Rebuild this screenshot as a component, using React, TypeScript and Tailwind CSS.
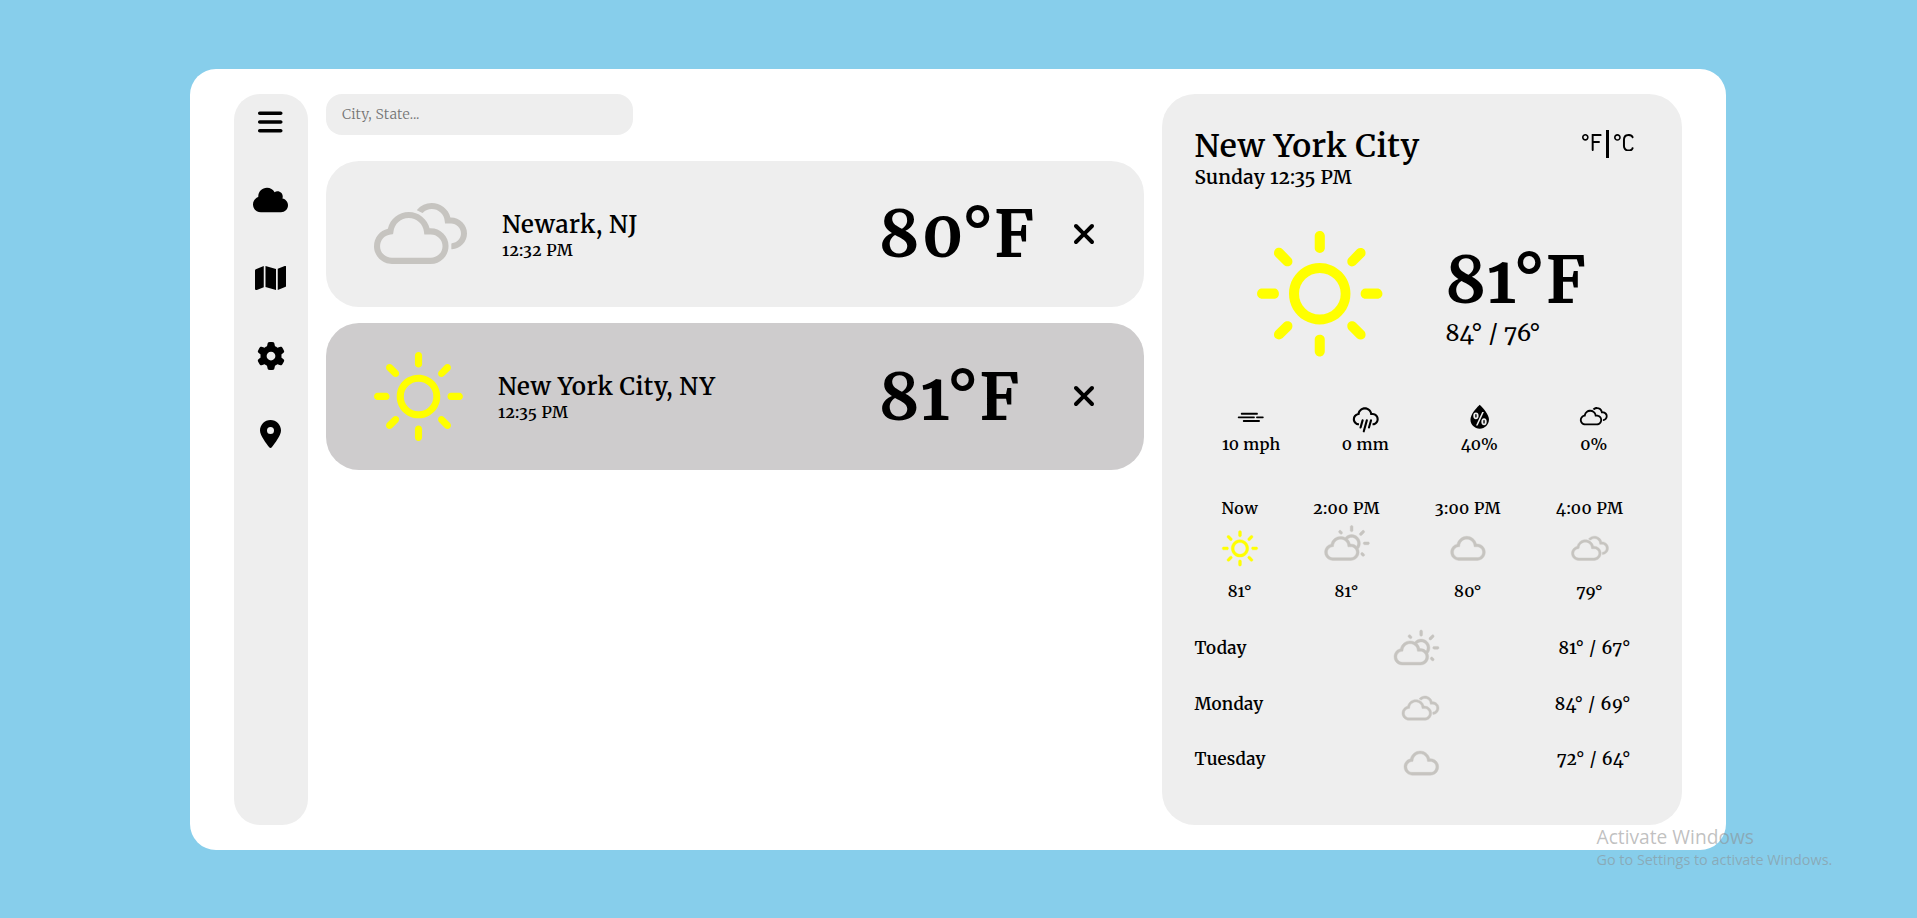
import type { ComponentType, ReactNode } from "react";
import type { IconBaseProps } from "react-icons";
import {
  WiCelsius,
  WiCloud,
  WiCloudy,
  WiDayCloudy,
  WiDaySunny,
  WiFahrenheit,
  WiHumidity,
  WiRain,
  WiWindy,
} from "react-icons/wi";
import { FaBars, FaCloud, FaGear, FaLocationDot, FaMap, FaXmark } from "react-icons/fa6";

type Icon = ComponentType<IconBaseProps>;

/* Tight view boxes, so that an icon's size is the size of its drawing. */
const TIGHT = {
  sunny: "4.37 4 21.24 21.26",
  cloudy: "3.89 7.3 22.21 14.55",
  cloud: "4.61 7.39 20.78 14.46",
  dayCloudy: "1.56 0.91 26.88 20.94",
  fahrenheit: "9.67 9.2 10.64 9.22",
  celsius: "9.75 9.12 10.46 9.36",
};

const navItems: { label: string; Icon: Icon; width: string }[] = [
  { label: "menu", Icon: FaBars, width: "w-[24.5px]" },
  { label: "weather", Icon: FaCloud, width: "w-[35px]" },
  { label: "map", Icon: FaMap, width: "w-[31.5px]" },
  { label: "settings", Icon: FaGear, width: "w-7" },
  { label: "location", Icon: FaLocationDot, width: "w-[21px]" },
];

function Sidebar() {
  return (
    <nav className="flex w-[74px] shrink-0 flex-col items-center gap-[50px] rounded-[26px] bg-[#eeeeee] pt-3.5 pr-px">
      {navItems.map(({ label, Icon, width }) => (
        <button key={label} aria-label={label} className="flex h-7 items-center justify-center">
          <Icon className={`h-7 shrink-0 ${width}`} />
        </button>
      ))}
    </nav>
  );
}

function CityCard({
  icon,
  name,
  time,
  temp,
  className,
}: {
  icon: ReactNode;
  name: string;
  time: string;
  temp: string;
  className: string;
}) {
  return (
    <article className={`flex items-center rounded-[33px] pl-12 ${className}`}>
      {icon}
      <div className="ml-[35px] flex-1 font-semibold whitespace-nowrap">
        <h2 className="text-2xl leading-[31px] tracking-[0.024em]">{name}</h2>
        <p className="text-base leading-5 tracking-[0.028em]">{time}</p>
      </div>
      <div className="flex w-[265px] items-center justify-between pr-[48.5px]">
        <p className="text-[64px] leading-[80px] font-bold tracking-[0.05em]">{temp}</p>
        <button aria-label="remove" className="-mt-px">
          <FaXmark className="h-8 w-6" />
        </button>
      </div>
    </article>
  );
}

const stats: { text: string; Icon: Icon }[] = [
  { text: "10 mph", Icon: WiWindy },
  { text: "0 mm", Icon: WiRain },
  { text: "40%", Icon: WiHumidity },
  { text: "0%", Icon: WiCloudy },
];

const hours: { time: string; temp: string; Icon: Icon; color: string }[] = [
  { time: "Now", temp: "81°", Icon: WiDaySunny, color: "text-[#ffff00]" },
  { time: "2:00 PM", temp: "81°", Icon: WiDayCloudy, color: "text-[#c6c4c0]" },
  { time: "3:00 PM", temp: "80°", Icon: WiCloud, color: "text-[#c6c4c0]" },
  { time: "4:00 PM", temp: "79°", Icon: WiCloudy, color: "text-[#c6c4c0]" },
];

const days: { day: string; range: string; icon: ReactNode }[] = [
  {
    day: "Today",
    range: "81° / 67°",
    icon: <WiDayCloudy viewBox={TIGHT.dayCloudy} className="h-[35px] w-[45px]" />,
  },
  {
    day: "Monday",
    range: "84° / 69°",
    icon: <WiCloudy viewBox={TIGHT.cloudy} className="h-[24.3px] w-[37px]" />,
  },
  {
    day: "Tuesday",
    range: "72° / 64°",
    icon: <WiCloud viewBox={TIGHT.cloud} className="h-[24.2px] w-[34.7px]" />,
  },
];

function Details() {
  return (
    <section className="w-[520px] shrink-0 rounded-[33px] bg-[#eeeeee] pt-8 font-semibold whitespace-nowrap">
      <header className="flex items-start justify-between pr-[48.5px] pl-[32.5px]">
        <div>
          <h1 className="text-[32px] leading-10 tracking-[0.019em]">New York City</h1>
          <p className="text-[19px] leading-[23px] tracking-[0.018em]">Sunday 12:35 PM</p>
        </div>
        <div className="flex items-start gap-[4.5px] pt-[3.5px]">
          <WiFahrenheit viewBox={TIGHT.fahrenheit} className="mt-[4.5px] h-[17px] w-[19.6px]" />
          <span className="h-7 w-[3px] bg-black" />
          <WiCelsius viewBox={TIGHT.celsius} className="mt-1 h-[17.5px] w-[19.6px]" />
        </div>
      </header>

      <div className="mt-[42px] flex items-start gap-[63px] pl-[95px]">
        <WiDaySunny viewBox={TIGHT.sunny} className="size-[125.5px] text-[#ffff00]" />
        <div className="pt-[11px]">
          <p className="text-[64px] leading-[77px] font-bold tracking-[0.05em]">81°F</p>
          <p className="text-[23px] leading-7 font-medium tracking-[0.022em]">84° / 76°</p>
        </div>
      </div>

      <ul className="mt-[41.5px] ml-8 grid w-[457px] grid-cols-4">
        {stats.map(({ text, Icon }) => (
          <li key={text} className="flex flex-col items-center">
            <Icon className="size-[37.5px]" />
            <span className="-mt-[1.5px] text-base leading-5 tracking-[0.02em]">{text}</span>
          </li>
        ))}
      </ul>

      <ul className="mt-[43.5px] flex justify-between pr-[58.5px] pl-[59.5px]">
        {hours.map(({ time, temp, Icon, color }) => (
          <li key={time} className="flex flex-col items-center">
            <span className="text-base leading-5 tracking-[0.03em]">{time}</span>
            <span className="mt-[6.5px] flex w-9 justify-center">
              <Icon className={`size-[50px] shrink-0 [stroke-width:0.25] ${color}`} />
            </span>
            <span className="mt-[7px] text-base leading-5 tracking-[0.03em]">{temp}</span>
          </li>
        ))}
      </ul>

      <ul className="mt-7 flex flex-col gap-5 pr-[51px] pl-[32.5px] text-[17px] leading-[22px]">
        {days.map(({ day, range, icon }) => (
          <li key={day} className="flex h-[35.5px] items-end justify-between">
            <div className="flex w-[244px] items-end justify-between">
              <span className="mb-[5.5px] tracking-[0.012em]">{day}</span>
              <span className="text-[#c6c4c0] [&>svg]:overflow-visible [&>svg]:[stroke-width:0.25]">
                {icon}
              </span>
            </div>
            <span className="mb-[5.5px] tracking-[0.042em]">{range}</span>
          </li>
        ))}
      </ul>
    </section>
  );
}

export default function App() {
  return (
    <div className="relative h-screen overflow-hidden bg-[#87ceeb] pt-[69px] pl-[190px] font-['Merriweather','Noto_Serif',serif] text-black [font-optical-sizing:none] [font-variant-numeric:oldstyle-nums] [&_svg]:block">
      <div className="flex h-[781px] w-[1536px] gap-[18px] rounded-[26px] bg-white px-11 py-[25px]">
        <Sidebar />
        <main className="flex flex-1 flex-col">
          <input
            placeholder="City, State..."
            className="h-[41px] w-[307px] rounded-2xl bg-[#eeeeee] pr-4 pb-0.5 pl-4 text-sm font-light tracking-[0.02em] outline-none placeholder:text-[#757575]"
          />
          <CityCard
            icon={
              <WiCloudy viewBox={TIGHT.cloudy} className="-mt-px h-[61px] w-[93px] text-[#c6c4c0]" />
            }
            name="Newark, NJ"
            time="12:32 PM"
            temp="80°F"
            className="mt-[26px] h-[146px] bg-[#eeeeee]"
          />
          <CityCard
            icon={<WiDaySunny viewBox={TIGHT.sunny} className="size-[89px] text-[#ffff00]" />}
            name="New York City, NY"
            time="12:35 PM"
            temp="81°F"
            className="mt-4 h-[147px] bg-[#cecccd]"
          />
        </main>
        <Details />
      </div>

      <div className="pointer-events-none absolute top-[823px] left-[1596.5px] font-['Open_Sans',sans-serif] whitespace-nowrap text-[#8c8c8c]/55">
        <p className="text-[19.2px] leading-[27px]">Activate Windows</p>
        <p className="text-[14.4px] leading-[19px]">Go to Settings to activate Windows.</p>
      </div>
    </div>
  );
}
